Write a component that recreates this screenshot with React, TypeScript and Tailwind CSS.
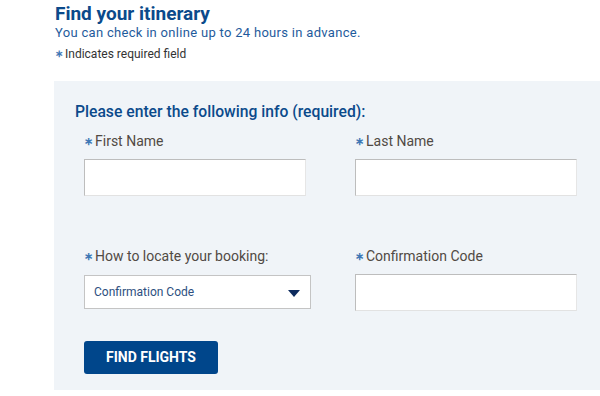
import { ChangeEvent, useState } from 'react'

function Star() {
  return <span className="mr-[2px] text-[11px] font-bold leading-none text-[#3f78b5]">∗</span>
}

function Label({ text }: { text: string }) {
  return (
    <label className="flex h-[18px] items-center pt-[2px] text-[14px] leading-[18px] text-[#514a44]">
      <Star />
      {text}
    </label>
  )
}

function TextField() {
  return (
    <input
      type="text"
      className="mt-[10px] block h-[37px] w-[222px] border border-[#bdbdbd] border-b-[#e2e2e2] border-r-[#e6e6e6] bg-white px-2 text-[13px] outline-none"
    />
  )
}

export default function App() {
  const [locate, setLocate] = useState('code')

  return (
    <div className="h-[396px] w-[600px] overflow-hidden bg-white font-['Roboto','Liberation_Sans',sans-serif]">
      <div className="pl-[55px] pt-[3px]">
        <h1 className="text-[19px] font-bold leading-[22px] text-[#0b4a8b]">Find your itinerary</h1>
        <p className="text-[13px] leading-[16px] tracking-[0.3px] text-[#1f5b9c]">
          You can check in online up to 24 hours in advance.
        </p>
        <p className="mt-[6px] flex items-center text-[12px] leading-[14px] text-[#333]">
          <span className="mr-[2px] text-[10px] font-bold leading-none text-[#3f78b5]">∗</span>Indicates required field
        </p>
      </div>

      <div className="ml-[54px] mt-[20px] h-[309px] bg-[#f0f4f8] pt-[21px]">
        <h2 className="pl-[21px] text-[15.7px] font-medium leading-[20px] text-[#0b4a8b]">
          Please enter the following info (required):
        </h2>

        <div className="mt-[9px] grid grid-cols-[271px_222px] gap-y-[50px] pl-[30px]">
          <div>
            <Label text="First Name" />
            <TextField />
          </div>
          <div>
            <Label text="Last Name" />
            <TextField />
          </div>
          <div>
            <Label text="How to locate your booking:" />
            <div className="relative mt-[11px] h-[34px] w-[227px] border border-[#c4c4c4] bg-white">
              <select
                value={locate}
                onChange={(e: ChangeEvent<HTMLSelectElement>) => setLocate(e.target.value)}
                className="h-full w-full appearance-none bg-transparent pl-[9px] text-[12px] text-[#2d4f80] outline-none"
              >
                <option value="code">Confirmation Code</option>
                <option value="ticket">Ticket Number</option>
              </select>
              <svg className="pointer-events-none absolute right-[10px] top-[14px]" width="12" height="7" viewBox="0 0 12 7">
                <path d="M0 0h12L6 7z" fill="#0d2b5e" />
              </svg>
            </div>
          </div>
          <div>
            <Label text="Confirmation Code" />
            <TextField />
          </div>
        </div>

        <button className="ml-[30px] mt-[30px] h-[33px] w-[134px] rounded-[3px] bg-[#00468b] text-[14px] font-bold text-white">
          FIND FLIGHTS
        </button>
      </div>
    </div>
  )
}
